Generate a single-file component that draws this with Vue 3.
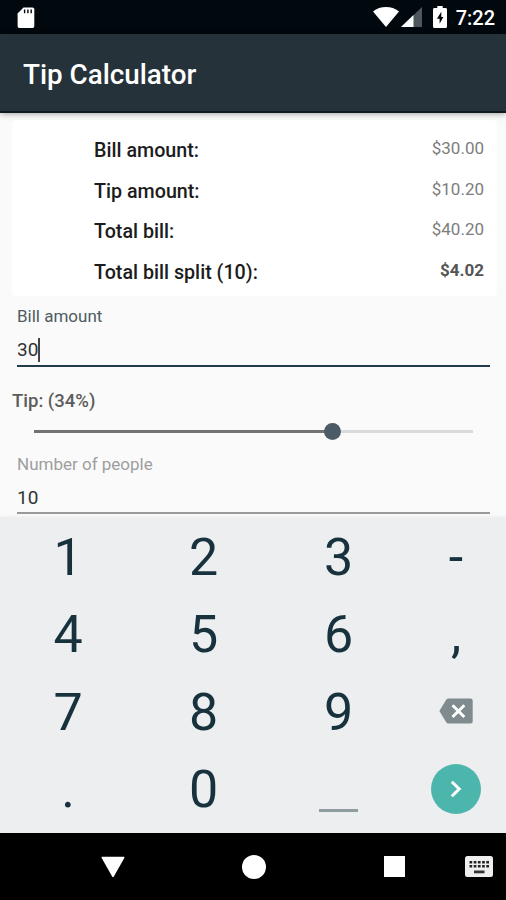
<script setup>
import { computed, ref } from 'vue'

const bill = ref('30')
const tipPercent = ref(34)
const people = ref('10')
const sliderMax = 50

const tip = computed(() => Number(bill.value) * tipPercent.value / 100)
const total = computed(() => Number(bill.value) + tip.value)
const money = (n) => '$' + n.toFixed(2)

const rows = computed(() => [
  { label: 'Bill amount:', value: money(Number(bill.value)), kind: 'r1' },
  { label: 'Tip amount:', value: money(tip.value), kind: 'r2' },
  { label: 'Total bill:', value: money(total.value), kind: 'r3' },
  { label: `Total bill split (${people.value}):`, value: money(total.value / Number(people.value || 1)), kind: 'strong' }
])

const sliderWidth = computed(() => (tipPercent.value / sliderMax * 100) + '%')

const keys = ['1', '2', '3', '-', '4', '5', '6', ',', '7', '8', '9', 'back', '.', '0', 'space', 'next']

function press(key) {
  if (key === 'back') bill.value = bill.value.slice(0, -1)
  else if (/^[0-9.]$/.test(key)) bill.value += key
}
</script>

<template>
  <div class="phone">
    <div class="status">
      <svg class="sd" width="18" height="22" viewBox="0 0 18 22">
        <path d="M6.5 0.5H15.5Q17.3 0.5 17.3 2.3V19Q17.3 21 15.5 21H2.3Q0.6 21 0.6 19V6.5Z" fill="#fff" />
        <path d="M7.6 2.6v3.6M10.9 2.6v3.6M14.2 2.6v3.6" stroke="#02070c" stroke-width="1.4" />
      </svg>
      <div class="status-right">
        <svg class="wifi" width="26" height="20" viewBox="0 0 26 20">
          <path d="M0 4.4Q5.7 0 13 0T26 4.4L13 20Z" fill="#fff" />
        </svg>
        <svg class="signal" width="21" height="20" viewBox="0 0 21 20">
          <path d="M21 0V20H0Z" fill="#4d575b" />
          <path d="M12.5 8.1V20H0Z" fill="#fff" />
        </svg>
        <svg class="battery" width="14" height="22" viewBox="0 0 14 22">
          <path d="M4.3 0H9.7V2H12.6Q14 2 14 3.4V20.4Q14 22 12.6 22H1.4Q0 22 0 20.4V3.4Q0 2 1.4 2H4.3Z" fill="#fff" />
          <path d="M8.3 5.8L3.9 12.8H6.6V17.8L10.4 11H8.3Z" fill="#02070c" />
        </svg>
        <span class="clock">7:22</span>
      </div>
    </div>

    <header class="appbar"><h1>Tip Calculator</h1></header>

    <main class="content">
      <section class="card">
        <div v-for="row in rows" :key="row.kind" class="row" :class="row.kind">
          <span class="label">{{ row.label }}</span>
          <span class="value">{{ row.value }}</span>
        </div>
      </section>

      <div class="field focused">
        <div class="field-label">Bill amount</div>
        <div class="field-value"><span>{{ bill }}</span><i class="caret"></i></div>
      </div>

      <div class="tip-label">Tip: ({{ tipPercent }}%)</div>
      <div class="slider">
        <div class="fill" :style="{ width: sliderWidth }"><i class="thumb"></i></div>
      </div>

      <div class="field people">
        <div class="field-label">Number of people</div>
        <div class="field-value"><span>{{ people }}</span></div>
      </div>
    </main>

    <section class="keypad">
      <button v-for="key in keys" :key="key" class="key" :class="{ icon: key === 'back' || key === 'next' }" @click="press(key)">
        <svg v-if="key === 'back'" width="34" height="26" viewBox="0 0 34 26">
          <path d="M9.5 0.5H31.5Q33.7 0.5 33.7 2.7V23.3Q33.7 25.5 31.5 25.5H9.5Q8 25.5 7.2 24.2L0.4 13L7.2 1.8Q8 0.5 9.5 0.5Z" fill="#7f8b8e" />
          <path d="M13.5 7.2L25.3 19M25.3 7.2L13.5 19" stroke="#fff" stroke-width="2.9" />
        </svg>
        <i v-else-if="key === 'space'" class="space"></i>
        <span v-else-if="key === 'next'" class="next">
          <svg width="12" height="18" viewBox="0 0 12 18">
            <path d="M1.8 1.7L9.2 9L1.8 16.3" fill="none" stroke="#fff" stroke-width="3" />
          </svg>
        </span>
        <span v-else>{{ key }}</span>
      </button>
    </section>

    <nav class="navbar">
      <svg class="nav-back" width="24" height="22" viewBox="0 0 24 22">
        <path d="M1.2 0.7H22.8Q24 0.7 23.3 1.9L13 20.3Q12 22 11 20.3L0.7 1.9Q0 0.7 1.2 0.7Z" fill="#fff" />
      </svg>
      <i class="nav-home"></i>
      <i class="nav-recent"></i>
      <svg class="nav-keyboard" width="28" height="21" viewBox="0 0 28 21">
        <rect width="28" height="21" rx="2.5" fill="#eee" />
        <path d="M4.5 6.2H24M4.5 10.3H24" stroke="#222" stroke-width="2.6" stroke-dasharray="2.7 1.5" />
        <path d="M9 15.9H19.5" stroke="#333" stroke-width="2.8" />
      </svg>
    </nav>
  </div>
</template>

<style>
body {
  margin: 0;
  background: #fafafa;
}
</style>

<style scoped>
.phone {
  width: 506px;
  height: 900px;
  display: flex;
  flex-direction: column;
  overflow: hidden;
  background: #fafafa;
  font-family: Roboto, "Liberation Sans", sans-serif;
}
.status {
  flex: none;
  height: 34px;
  box-sizing: border-box;
  display: flex;
  justify-content: space-between;
  align-items: flex-start;
  padding: 7px 11px 0 17px;
  background: #01080e;
}
.status svg {
  display: block;
}
.status-right {
  display: flex;
  align-items: flex-start;
}
.signal {
  margin-left: 2px;
}
.battery {
  margin: -1px 9px 0 11px;
}
.clock {
  color: #fff;
  font-size: 20px;
  font-weight: 500;
  line-height: 22px;
}
.appbar {
  flex: none;
  position: relative;
  height: 79px;
  box-sizing: border-box;
  display: flex;
  align-items: center;
  padding: 0 0 0 23px;
  background: #263239;
  border-bottom: 2px solid #10191e;
  box-shadow: 0 1px 6px rgba(0, 0, 0, 0.35);
}
h1 {
  margin: 4px 0 0;
  color: #fff;
  font-size: 27.8px;
  font-weight: 500;
  line-height: 32px;
}
.content {
  flex: none;
  height: 404px;
  box-sizing: border-box;
  padding: 7px 9px 0 12px;
}
.card {
  height: 176px;
  box-sizing: border-box;
  padding: 10px 13px 0 82px;
  background: #fff;
  border-radius: 5px;
}
.row {
  height: 40.7px;
  display: flex;
  justify-content: space-between;
  line-height: 42px;
}
.label {
  color: #1c1c1c;
  font-size: 19.7px;
  font-weight: 500;
}
.value {
  color: #7d7d7d;
  font-size: 17px;
  line-height: 36px;
}
.strong .value {
  color: #555;
  font-weight: 700;
}
.field {
  margin: 0 7px 0 5px;
  color: #333;
}
.field-label {
  height: 40px;
  color: #4e5a62;
  font-size: 17px;
  line-height: 41px;
}
.field-value {
  height: 28px;
  display: flex;
  align-items: center;
  font-size: 19px;
  line-height: 28px;
  border-bottom: 2px solid #999;
}
.focused .field-value {
  padding-bottom: 1px;
  border-color: #213c4a;
}
.caret {
  width: 2px;
  height: 24px;
  background: #444;
}
.tip-label {
  height: 63px;
  color: #5c5c5c;
  font-size: 18.5px;
  font-weight: 500;
  line-height: 69px;
}
.slider {
  height: 3px;
  margin: 0 24px 0 22px;
  background: #dadada;
}
.fill {
  position: relative;
  height: 3px;
  background: #727272;
}
.thumb {
  position: absolute;
  top: -7px;
  right: -8px;
  width: 17px;
  height: 17px;
  border-radius: 50%;
  background: #4c5b65;
}
.people {
  margin-top: 11px;
}
.people .field-label {
  color: #9e9e9e;
}
.keypad {
  flex: none;
  height: 316px;
  box-sizing: border-box;
  display: grid;
  grid-template-columns: 136px 135px 135px 100px;
  grid-template-rows: repeat(4, 77.3px);
  padding-top: 2px;
  background: #eceef0;
  box-shadow: 0 -1px 3px rgba(0, 0, 0, 0.04);
}
.key {
  display: flex;
  justify-content: center;
  align-items: center;
  padding: 0;
  border: 0;
  background: none;
  color: #17313d;
  font-family: inherit;
  font-size: 52px;
  line-height: 77px;
}
.key.icon {
  padding-bottom: 2px;
}
.space {
  width: 39px;
  height: 3px;
  margin-top: 42px;
  background: #909c9f;
}
.next {
  width: 50px;
  height: 50px;
  display: flex;
  align-items: center;
  justify-content: center;
  border-radius: 50%;
  background: #4db6ac;
}
.navbar {
  flex: none;
  height: 67px;
  box-sizing: border-box;
  display: flex;
  align-items: center;
  padding-left: 101px;
  background: #000;
}
.nav-home {
  width: 24px;
  height: 24px;
  margin-left: 117px;
  border-radius: 50%;
  background: #fff;
}
.nav-recent {
  width: 21px;
  height: 21px;
  margin-left: 118px;
  background: #fff;
}
.nav-keyboard {
  margin-left: 60px;
}
</style>
